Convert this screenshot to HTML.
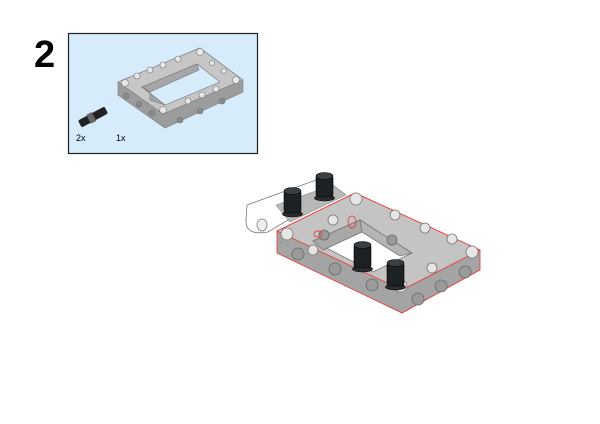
<!DOCTYPE html>
<html><head><style>
html,body{margin:0;padding:0;background:#fff;width:600px;height:424px;overflow:hidden;font-family:"Liberation Sans",sans-serif}
</style></head><body>
<svg width="600" height="424" viewBox="0 0 600 424" xmlns="http://www.w3.org/2000/svg">
<text x="34" y="67" font-family="Liberation Sans" font-weight="bold" font-size="38">2</text>
<rect x="68.5" y="33.5" width="189" height="120" fill="#d6ecfb" stroke="#222" stroke-width="1.2"/>
<!-- small frame -->
<g stroke="#777" stroke-width="0.6">
<polygon points="118,82 200,48 243,80 243,92 165,128 118,95" fill="#9c9c9c"/>
<polygon points="118,82 200,48 243,80 163,114" fill="#c6c6c6"/>
<polygon points="142,87 197,64 220,82 165,105" fill="#d6ecfb"/>
<polygon points="142,87 197,64 199,70 150,92" fill="#a6a6a6"/>
<polygon points="142,87 150,92 150,100 165,105" fill="#a6a6a6"/>
<g fill="#e8e8e8">
<circle cx="125" cy="83" r="3.5"/><circle cx="200" cy="52" r="3.5"/><circle cx="236" cy="80" r="3.5"/><circle cx="163" cy="110" r="3.5"/>
<circle cx="137" cy="76" r="3"/><circle cx="150" cy="70" r="3"/><circle cx="163" cy="65" r="3"/><circle cx="178" cy="59" r="3"/><circle cx="212" cy="63" r="2.5"/><circle cx="224" cy="71" r="2.5"/><circle cx="188" cy="101" r="3"/><circle cx="202" cy="95" r="3"/><circle cx="216" cy="89" r="3"/>
</g>
<g fill="#8a8a8a"><circle cx="126" cy="96" r="3"/><circle cx="139" cy="104" r="3"/><circle cx="152" cy="113" r="3"/><circle cx="180" cy="120" r="3"/><circle cx="200" cy="111" r="3"/><circle cx="222" cy="101" r="3"/></g>
</g>
<!-- small pin -->
<g transform="rotate(-28 93 117)"><rect x="78" y="113" width="30" height="8" rx="2" fill="#222"/><rect x="88" y="112" width="6" height="10" fill="#666"/></g>
<text x="76" y="141" font-size="9">2x</text>
<text x="116" y="141" font-size="9">1x</text>
<!-- white beam -->
<path d="M247,205 L316,180 L338,190 L268,232 Q245,236 246,220 Z" fill="#fff" stroke="#777" stroke-width="0.8"/>
<ellipse cx="262" cy="225" rx="5" ry="6" fill="#eee" stroke="#999"/>
<!-- grey beam under pins -->
<polygon points="276,205 333,185 346,195 290,222" fill="#b8b8b8" stroke="#888" stroke-width="0.6"/>
<!-- main frame -->
<g stroke-width="0.8">
<polygon points="277,231 355,193 480,250 480,270 402,313 277,253" fill="#a4a4a4" stroke="#e33"/>
<polygon points="277,231 355,193 480,250 402,290" fill="#c4c4c4" stroke="#e33"/>
<polygon points="313,241 360,220 412,253 373,272" fill="#fff" stroke="#777"/>
<polygon points="313,241 360,220 362,232 323,250" fill="#a8a8a8" stroke="#777"/>
<polygon points="360,220 362,232 400,256 412,253" fill="#b4b4b4" stroke="#777"/>
<g fill="#e6e6e6" stroke="#777">
<circle cx="287" cy="234" r="6"/><circle cx="356" cy="199" r="6"/><circle cx="472" cy="252" r="6"/><circle cx="401" cy="286" r="6"/>
<circle cx="313" cy="250" r="5"/><circle cx="333" cy="220" r="5"/><circle cx="395" cy="215" r="5"/><circle cx="425" cy="228" r="5"/><circle cx="452" cy="239" r="5"/><circle cx="432" cy="268" r="5"/>
</g>
<g fill="#9a9a9a" stroke="#666">
<circle cx="298" cy="254" r="6"/><circle cx="335" cy="269" r="6"/><circle cx="372" cy="285" r="6"/><circle cx="418" cy="299" r="6"/><circle cx="441" cy="286" r="6"/><circle cx="465" cy="272" r="6"/><circle cx="324" cy="235" r="5"/><circle cx="392" cy="240" r="5"/>
</g>
<ellipse cx="352" cy="222" rx="4" ry="6" fill="none" stroke="#e33"/>
<ellipse cx="318" cy="234" rx="4" ry="3" fill="none" stroke="#e33"/>
</g>
<!-- pins -->
<g fill="#1d2124" stroke="#000" stroke-width="0.6">
<ellipse cx="292.5" cy="214" rx="10" ry="3" fill="#2a2d30"/><rect x="284" y="190" width="17" height="23" rx="3"/><ellipse cx="292.5" cy="191" rx="8.5" ry="3.5" fill="#3a3f44"/>
<ellipse cx="324.5" cy="198" rx="10" ry="3" fill="#2a2d30"/><rect x="316" y="175" width="17" height="22" rx="3"/><ellipse cx="324.5" cy="176" rx="8.5" ry="3.5" fill="#3a3f44"/>
<ellipse cx="362.5" cy="269" rx="10" ry="3" fill="#2a2d30"/><rect x="354" y="244" width="17" height="24" rx="3"/><ellipse cx="362.5" cy="245" rx="8.5" ry="3.5" fill="#3a3f44"/>
<ellipse cx="395.5" cy="287" rx="10" ry="3" fill="#2a2d30"/><rect x="387" y="262" width="17" height="24" rx="3"/><ellipse cx="395.5" cy="263" rx="8.5" ry="3.5" fill="#3a3f44"/>
</g>
</svg>
</body></html>
